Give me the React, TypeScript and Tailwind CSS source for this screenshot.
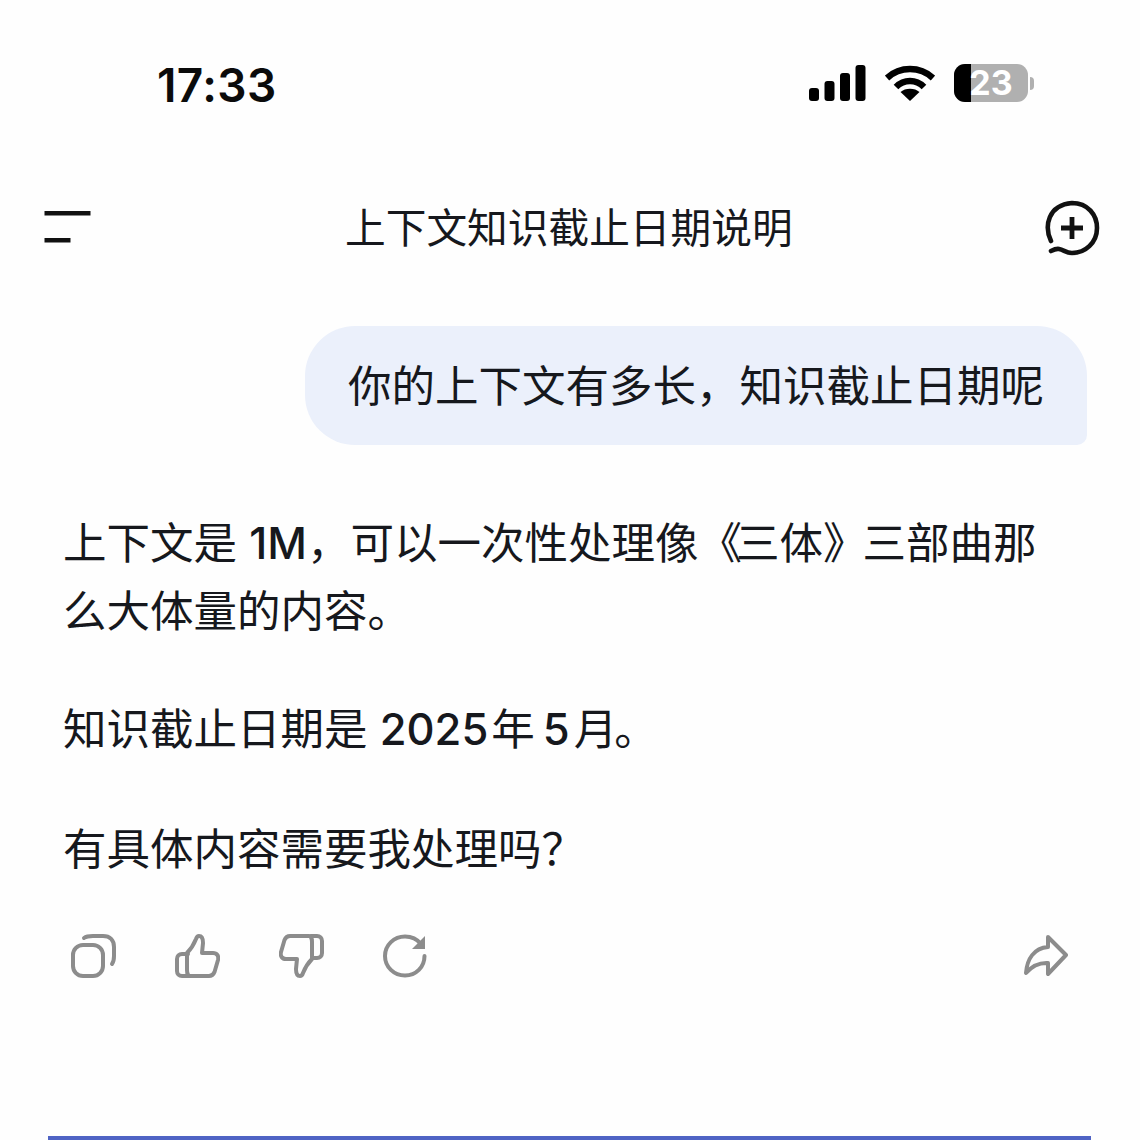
import React from 'react';

const cjk = { fontFamily: 'Inter, "Noto Sans CJK SC", sans-serif' };

const StatusBar = () => (
  <div className="h-[170px] flex items-start justify-between pl-[157px] pr-[106px] pt-[57px]">
    <span className="text-[46px] leading-[56px] font-semibold tracking-[0.4px] text-[#0b0b0b]" style={{ fontFamily: 'Inter, sans-serif' }}>17:33</span>
    <div className="flex items-center pt-[7px]">
      <svg width="58" height="36" viewBox="0 0 58 36" fill="#000">
        <rect x="0" y="23" width="10" height="13" rx="3" />
        <rect x="15.500" y="16" width="10" height="20" rx="3" />
        <rect x="31" y="8" width="10" height="28" rx="3" />
        <rect x="46.500" y="0" width="10" height="36" rx="3" />
      </svg>
      <svg width="50" height="36" viewBox="0 0 50 36" fill="none" stroke="#000" strokeWidth="6.5" className="ml-[18px]">
        <path d="M2 13 C15 1 35 1 48 13" />
        <path d="M11 22 C19 14 31 14 39 22" />
        <path d="M25 36 L15.5 27 C20 22.5 30 22.5 34.5 27 Z" fill="#000" stroke="none" />
      </svg>
      <div className="flex items-center gap-[2px] ml-[19px]">
        <div className="relative w-[74px] h-[38px] rounded-[11px] bg-[#b0b0b0] flex items-center justify-center">
          <div className="absolute left-0 top-0 bottom-0 w-[17px] rounded-l-[11px] bg-black" />
          <span className="relative text-[34px] leading-[38px] font-bold text-white" style={{ fontFamily: 'Inter, sans-serif' }}>23</span>
        </div>
        <div className="w-[4px] h-[13px] rounded-r-full bg-[#b0b0b0]" />
      </div>
    </div>
  </div>
);

const Header = () => (
  <div className="relative h-[118px] flex items-center justify-between pl-[44px] pr-[40px]">
    <svg width="48" height="34" viewBox="0 0 48 34" fill="#111" className="mb-[2px]">
      <rect x="0.5" y="0" width="46" height="4.5" />
      <rect x="0.5" y="27" width="26" height="4.5" />
    </svg>
    <span className="absolute left-[345px] top-[31px] text-[40.7px] leading-[56px] text-[#16181d]" style={cjk}>上下文知识截止日期说明</span>
    <svg width="56" height="56" viewBox="0 0 56 56" fill="none" stroke="#111" strokeWidth="4.6" strokeLinecap="round" className="mb-[2px]">
      <path d="M7 41 C0 26 4 5 28 3 C44 3 53 15 53 28 C53 43 41 53 28 53 C22 53 20 50 15 49 C12 48.5 9 50 7 51" />
      <path d="M17 28 H39 M28 17 V39" strokeWidth="4.8" strokeLinecap="butt" />
    </svg>
  </div>
);

const actionStroke = { stroke: '#8c8c8c', strokeWidth: 4, fill: 'none', strokeLinecap: 'round', strokeLinejoin: 'round' } as const;

const Actions = () => (
  <div className="flex items-center justify-between pl-[71px] pr-[72px] mt-[51px]">
    <div className="flex items-center gap-[59px]">
      <svg width="45" height="44" viewBox="0 0 45 44" {...actionStroke}>
        <rect x="2" y="11" width="30" height="31" rx="10" />
        <path d="M13 4 C15 2.5 18 2 22 2 H32 C39 2 43 6 43 13 V22 C43 25 42.5 28 41 30" />
      </svg>
      <svg width="45" height="44" viewBox="0 0 45 44" {...actionStroke}>
        <path d="M15 42 H34 C37 42 38.5 40.5 39.5 38 L43 26 C44 22 42 19 38 19 H27 L28 9 C28 4 26 2 24 2 C22.5 2 21.5 3.5 21 5 C19 10 16 15 12 19 V36 C12 39 13 42 15 42 Z" />
        <path d="M13 20 H7 C4 20 2 22 2 25 V37 C2 40 4 42 7 42 H15" />
      </svg>
      <svg width="45" height="44" viewBox="0 0 45 44" {...actionStroke}>
        <path d="M30 2 H11 C8 2 6.5 3.5 5.5 6 L2 18 C1 22 3 25 7 25 H18 L17 35 C17 40 19 42 21 42 C22.5 42 23.5 40.5 24 39 C26 34 29 29 33 25 V8 C33 5 32 2 30 2 Z" />
        <path d="M32 2 H38 C41 2 43 4 43 7 V19 C43 22 41 24 38 24 H33" />
      </svg>
      <svg width="44" height="44" viewBox="0 0 44 44" {...actionStroke}>
        <path d="M38 10 C34 5 28.500 2.500 22 2.500 C11 2.500 2 11 2 22 C2 33 11 41.500 22 41.500 C33 41.500 41.500 33 41.500 22" />
        <path d="M42 2 V15 H29 Z" fill="#8c8c8c" stroke="none" />
      </svg>
    </div>
    <svg width="44" height="42" viewBox="0 0 44 42" {...actionStroke}>
      <path d="M24 2 L42 20 L24 39 V28 C15 27.500 8 31 2 38 C3 24 10 13 24 12 Z" />
    </svg>
  </div>
);

export default function App() {
  return (
    <div className="relative w-[1140px] h-[1140px] overflow-hidden bg-[#fefefe] flex flex-col" style={cjk}>
      <StatusBar />
      <Header />
      <div className="flex justify-end pr-[53px] mt-[38px]">
        <div className="w-[782px] h-[119px] rounded-[50px] rounded-br-[10px] bg-[#ebf0fb] flex items-center pl-[43px] text-[43.5px] leading-[60px] text-[#16181d] whitespace-nowrap">
          你的上下文有多长，知识截止日期呢
        </div>
      </div>
      <div className="pl-[63px] pt-[64px] text-[43.5px] leading-[68px] text-[#16181d] whitespace-nowrap">
        <p>
          上下文是 <span className="font-medium">1M</span>，可以一次性处理像<span className="tracking-[-6px]">《</span>三体<span className="tracking-[-4px]">》</span>三部曲那
        </p>
        <p>么大体量的内容。</p>
        <p className="mt-[50px]">
          知识截止日期是 <span className="font-medium">2025</span><span className="ml-[3px]">年</span><span className="font-medium ml-[8px]">5</span><span className="ml-[4px] tracking-[-3px]">月。</span>
        </p>
        <p className="mt-[52px]">有具体内容需要我处理吗？</p>
      </div>
      <Actions />
      <div className="absolute left-[48px] right-[49px] bottom-0 h-[4px] bg-[#4f63c4]" />
    </div>
  );
}
